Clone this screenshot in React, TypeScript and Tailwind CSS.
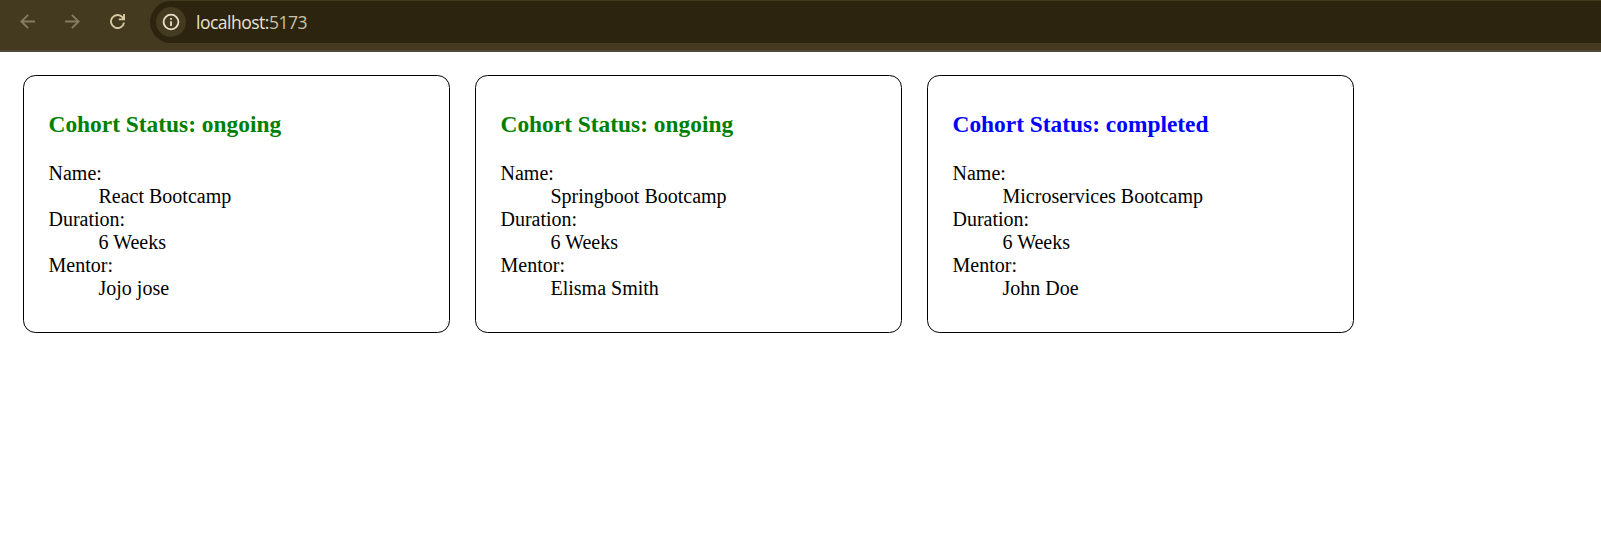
type Cohort = {
  status: "ongoing" | "completed";
  name: string;
  duration: string;
  mentor: string;
};

const cohorts: Cohort[] = [
  { status: "ongoing", name: "React Bootcamp", duration: "6 Weeks", mentor: "Jojo jose" },
  { status: "ongoing", name: "Springboot Bootcamp", duration: "6 Weeks", mentor: "Elisma Smith" },
  { status: "completed", name: "Microservices Bootcamp", duration: "6 Weeks", mentor: "John Doe" },
];

function BackIcon() {
  return (
    <svg width="15" height="15" viewBox="0 0 15 15" fill="none" stroke="currentColor" strokeWidth="1.9">
      <path d="M15 7.5H1.6M8.1 0.8L1.4 7.5L8.1 14.2" />
    </svg>
  );
}

function ForwardIcon() {
  return (
    <svg width="15" height="15" viewBox="0 0 15 15" fill="none" stroke="currentColor" strokeWidth="1.9">
      <path d="M0 7.5H13.4M6.9 0.8L13.6 7.5L6.9 14.2" />
    </svg>
  );
}

function ReloadIcon() {
  return (
    <svg width="15" height="15" viewBox="0 0 15 15" fill="none" stroke="currentColor" strokeWidth="1.9">
      <path d="M14 8.6A6.55 6.55 0 1 1 12.4 3.1L13.6 4.8M14.05 0V5.4H8.8" />
    </svg>
  );
}

function InfoIcon() {
  return (
    <svg width="18" height="18" viewBox="0 0 18 18" fill="none" stroke="currentColor" strokeWidth="1.8">
      <circle cx="9" cy="9" r="7.4" />
      <path d="M9 8.2V13M9 5V6.8" />
    </svg>
  );
}

function BrowserBar() {
  return (
    <header className="flex h-[52px] items-start border-b-2 border-[#4d483b] bg-[#433a20] pt-px font-['Open_Sans','Noto_Sans',sans-serif]">
      <nav className="flex h-[41px] w-[150px] shrink-0 items-center gap-[30px] pl-5 text-[#857b63]">
        <BackIcon />
        <ForwardIcon />
        <span className="text-[#d7c9a2]">
          <ReloadIcon />
        </span>
      </nav>
      <div className="flex h-[42px] flex-1 items-center rounded-l-full bg-[#2c240e] pl-1.5">
        <span className="flex size-[30px] items-center justify-center rounded-full bg-[#433a20] text-[#e8dfcd]">
          <InfoIcon />
        </span>
        <span className="ml-2.5 pt-0.5 text-[17.5px] leading-none tracking-[-0.5px] text-[#e9e2d2]">
          localhost:<span className="text-[#c9c0a8]">5173</span>
        </span>
      </div>
    </header>
  );
}

function CohortCard({ status, name, duration, mentor }: Cohort) {
  return (
    <article className="h-[258px] w-[427px] rounded-[12.5px] border border-black px-[24.5px] pt-[35px]">
      <h3
        className={
          status === "ongoing"
            ? "text-[23.4px] leading-[27px] font-bold text-[#008000]"
            : "text-[23.4px] leading-[27px] font-bold text-[#0000ff]"
        }
      >
        Cohort Status: {status}
      </h3>
      <dl className="mt-6 text-[20px] leading-[23px]">
        <dt>Name:</dt>
        <dd className="ml-[50px]">{name}</dd>
        <dt>Duration:</dt>
        <dd className="ml-[50px]">{duration}</dd>
        <dt>Mentor:</dt>
        <dd className="ml-[50px]">{mentor}</dd>
      </dl>
    </article>
  );
}

export default function App() {
  return (
    <div className="h-[550px] overflow-hidden bg-white text-black">
      <BrowserBar />
      <main className="flex gap-[25px] pt-[23px] pl-[23px] font-['Liberation_Serif',serif]">
        {cohorts.map((cohort) => (
          <CohortCard key={cohort.name} {...cohort} />
        ))}
      </main>
    </div>
  );
}
